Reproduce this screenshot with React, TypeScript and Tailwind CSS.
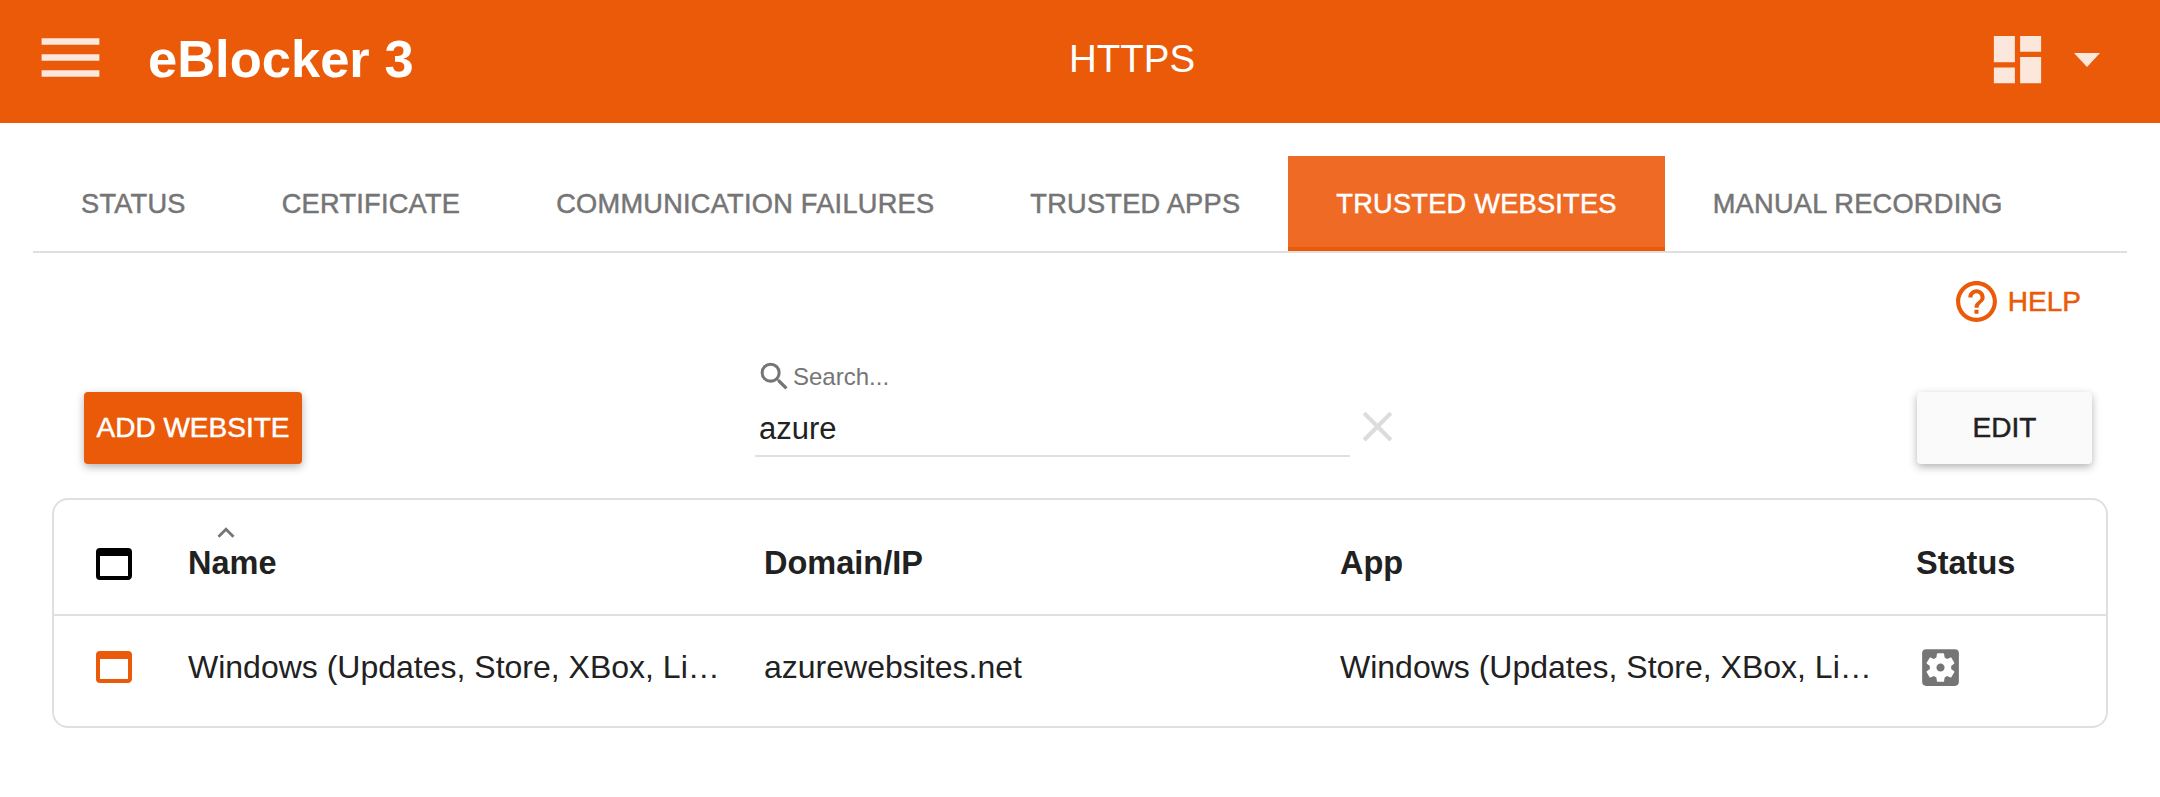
import { MdMenu, MdDashboard, MdHelpOutline, MdSearch, MdClose, MdKeyboardArrowUp, MdWebAsset, MdSettingsApplications } from 'react-icons/md';

const tabs = ['STATUS', 'CERTIFICATE', 'COMMUNICATION FAILURES', 'TRUSTED APPS', 'TRUSTED WEBSITES', 'MANUAL RECORDING'];

function Tab({ label }: { label: string }) {
  const active = label === 'TRUSTED WEBSITES';
  return (
    <div
      className={`flex h-[95px] items-center px-[48px] text-[27.2px] tracking-[0.25px] [-webkit-text-stroke:0.5px] ${
        active ? 'border-b-4 border-[#ea5a08] bg-[#ef6b25] pt-[6px] text-white' : 'pt-[2px] text-[#757575]'
      }`}
    >
      {label}
    </div>
  );
}

export default function App() {
  const appName = 'Windows (Updates, Store, XBox, Li…';

  return (
    <div className="min-h-[797px] bg-white font-['Liberation_Sans',Arial,sans-serif] text-[#212121]">
      <header className="flex h-[123px] items-center bg-[#ea5a08] pb-[5px] pl-[32px] pr-[60px] text-white">
        <MdMenu className="-mt-[3px] text-[#fbe7db]" size={77} />
        <div className="ml-[39px] w-[500px] text-[52.5px] font-bold">eBlocker 3</div>
        <div className="ml-[421px] text-[38.5px]">HTTPS</div>
        <div className="ml-auto flex items-center">
          <MdDashboard className="text-[#fbe7db]" size={63} />
          <svg className="ml-[25px] mt-[1px]" width="26" height="14" viewBox="0 0 26 14">
            <path d="M0 0h26L13 14z" fill="#fbe7db" />
          </svg>
        </div>
      </header>

      <nav className="mx-[33px] mt-[33px] flex border-b-2 border-[#e0e0e0]">
        {tabs.map(tab => (
          <Tab key={tab} label={tab} />
        ))}
      </nav>

      <div className="mr-[79px] mt-[24px] flex items-center justify-end gap-[7px] text-[28px] text-[#ea5a08] [-webkit-text-stroke:0.5px]">
        <MdHelpOutline size={49} />
        HELP
      </div>

      <div className="mx-[67px] mt-[66px] flex h-[72px] items-start text-[28px] [-webkit-text-stroke:0.5px]">
        <button className="ml-[17px] h-full w-[218px] rounded bg-[#ea5a08] text-white shadow-[0_3px_8px_rgba(0,0,0,0.3)]">
          ADD WEBSITE
        </button>
        <div className="relative ml-[453px] h-[65px] w-[595px] border-b-2 border-[#e0e0e0] [-webkit-text-stroke:0]">
          <div className="absolute left-[1px] top-[-34px] flex items-center text-[24px] text-[#757575]">
            <MdSearch size={37} />
            Search...
          </div>
          <div className="pl-1 pt-[14px] text-[31px]">azure</div>
        </div>
        <MdClose className="ml-[2px] mt-[9px] text-[#dcdcdc]" size={51} />
        <button className="ml-auto mr-[1px] h-full w-[175px] rounded bg-[#fafafa] shadow-[0_3px_8px_rgba(0,0,0,0.3)]">EDIT</button>
      </div>

      <div className="mx-[52px] mt-[34px] rounded-[16px] border-2 border-[#e0e0e0] text-[32px]">
        <div className="grid h-[116px] grid-cols-[134px_576px_576px_576px_1fr] items-center border-b-2 border-[#e0e0e0] pt-[13px] text-[32.5px] font-bold">
          <MdWebAsset className="ml-[36px] text-black" size={48} />
          <div className="relative">
            Name
            <MdKeyboardArrowUp className="absolute left-[21px] top-[-23px] text-[#757575]" size={34} />
          </div>
          <div>Domain/IP</div>
          <div>App</div>
          <div>Status</div>
        </div>
        <div className="grid h-[110px] grid-cols-[134px_576px_576px_576px_1fr] items-center pb-[8px]">
          <MdWebAsset className="ml-[36px] text-[#ea5a08]" size={48} />
          <div className="whitespace-nowrap">{appName}</div>
          <div>azurewebsites.net</div>
          <div className="whitespace-nowrap">{appName}</div>
          <MdSettingsApplications className="text-[#757575]" size={49} />
        </div>
      </div>
    </div>
  );
}
